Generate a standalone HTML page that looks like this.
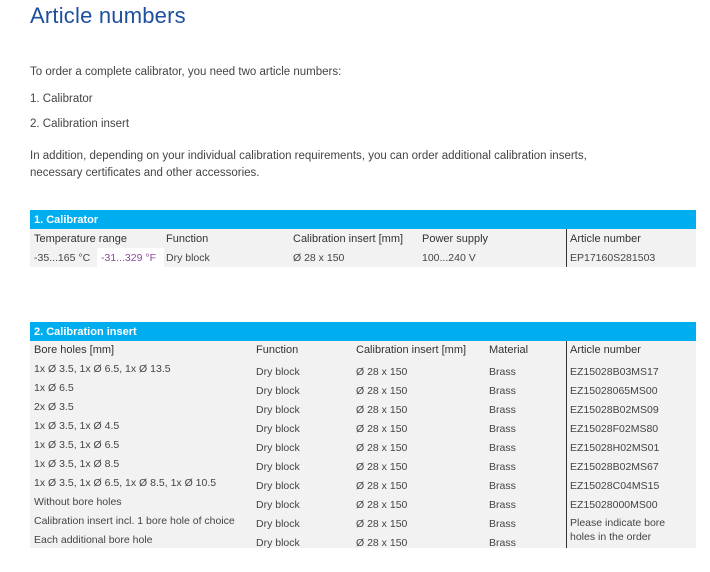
<!DOCTYPE html>
<html><head><meta charset="utf-8"><style>
*{margin:0;padding:0;box-sizing:border-box}
body{width:710px;height:572px;background:#fff;font-family:"Liberation Sans",sans-serif;color:#444;position:relative;overflow:hidden}
.a{position:absolute;white-space:nowrap}
h1{position:absolute;left:30px;top:3px;font-size:22px;font-weight:normal;color:#1d4f9e;letter-spacing:0.2px}
.p{position:absolute;left:30px;font-size:11.5px;color:#444}
.bar{position:absolute;left:30px;width:666px;height:19px;background:#00aeef;color:#fff;font-weight:bold;font-size:11px;padding:4px 0 0 4px}
.bg{position:absolute;left:30px;width:666px;background:#f2f2f2}
.vl{position:absolute;left:566px;width:1px;background:#333}
.c{position:absolute;font-size:10.5px;color:#444;white-space:nowrap}
.h{color:#333;font-size:11px}
</style></head><body>
<h1>Article numbers</h1>
<div class="p" style="top:66px">To order a complete calibrator, you need two article numbers:</div>
<div class="p" style="top:93px">1. Calibrator</div>
<div class="p" style="top:118px">2. Calibration insert</div>
<div class="p" style="top:150px">In addition, depending on your individual calibration requirements, you can order additional calibration inserts,</div>
<div class="p" style="top:167px">necessary certificates and other accessories.</div>

<div class="bar" style="top:210px">1. Calibrator</div>
<div class="bg" style="top:229px;height:38px"></div>
<div class="a" style="left:97px;top:248px;width:67px;height:19px;background:#fff"></div>
<div class="vl" style="top:229px;height:38px"></div>
<div class="c h" style="left:34px;top:233px">Temperature range</div>
<div class="c h" style="left:166px;top:233px">Function</div>
<div class="c h" style="left:293px;top:233px">Calibration insert [mm]</div>
<div class="c h" style="left:422px;top:233px">Power supply</div>
<div class="c h" style="left:570px;top:233px">Article number</div>
<div class="c" style="left:34px;top:252px">-35...165 °C</div>
<div class="c" style="left:101px;top:252px;color:#8a4a9a">-31...329 °F</div>
<div class="c" style="left:166px;top:252px">Dry block</div>
<div class="c" style="left:293px;top:252px">Ø 28 x 150</div>
<div class="c" style="left:422px;top:252px">100...240 V</div>
<div class="c" style="left:570px;top:252px">EP17160S281503</div>

<div class="bar" style="top:322px">2. Calibration insert</div>
<div class="bg" style="top:341px;height:207px"></div>
<div class="vl" style="top:341px;height:207px"></div>
<div class="c h" style="left:34px;top:344px">Bore holes [mm]</div>
<div class="c h" style="left:256px;top:344px">Function</div>
<div class="c h" style="left:356px;top:344px">Calibration insert [mm]</div>
<div class="c h" style="left:489px;top:344px">Material</div>
<div class="c h" style="left:570px;top:344px">Article number</div>

<div class="c" style="left:34px;top:363px">1x Ø 3.5, 1x Ø 6.5, 1x Ø 13.5</div>
<div class="c" style="left:34px;top:382px">1x Ø 6.5</div>
<div class="c" style="left:34px;top:401px">2x Ø 3.5</div>
<div class="c" style="left:34px;top:420px">1x Ø 3.5, 1x Ø 4.5</div>
<div class="c" style="left:34px;top:439px">1x Ø 3.5, 1x Ø 6.5</div>
<div class="c" style="left:34px;top:458px">1x Ø 3.5, 1x Ø 8.5</div>
<div class="c" style="left:34px;top:477px">1x Ø 3.5, 1x Ø 6.5, 1x Ø 8.5, 1x Ø 10.5</div>
<div class="c" style="left:34px;top:496px">Without bore holes</div>
<div class="c" style="left:34px;top:515px">Calibration insert incl. 1 bore hole of choice</div>
<div class="c" style="left:34px;top:534px">Each additional bore hole</div>

<div class="c" style="left:256px;top:363px;line-height:19px">Dry block<br>Dry block<br>Dry block<br>Dry block<br>Dry block<br>Dry block<br>Dry block<br>Dry block<br>Dry block<br>Dry block</div>
<div class="c" style="left:356px;top:363px;line-height:19px">Ø 28 x 150<br>Ø 28 x 150<br>Ø 28 x 150<br>Ø 28 x 150<br>Ø 28 x 150<br>Ø 28 x 150<br>Ø 28 x 150<br>Ø 28 x 150<br>Ø 28 x 150<br>Ø 28 x 150</div>
<div class="c" style="left:489px;top:363px;line-height:19px">Brass<br>Brass<br>Brass<br>Brass<br>Brass<br>Brass<br>Brass<br>Brass<br>Brass<br>Brass</div>
<div class="c" style="left:570px;top:363px;line-height:19px">EZ15028B03MS17<br>EZ15028065MS00<br>EZ15028B02MS09<br>EZ15028F02MS80<br>EZ15028H02MS01<br>EZ15028B02MS67<br>EZ15028C04MS15<br>EZ15028000MS00</div>
<div class="c" style="left:570px;top:516px;line-height:14px">Please indicate bore<br>holes in the order</div>
</body></html>
